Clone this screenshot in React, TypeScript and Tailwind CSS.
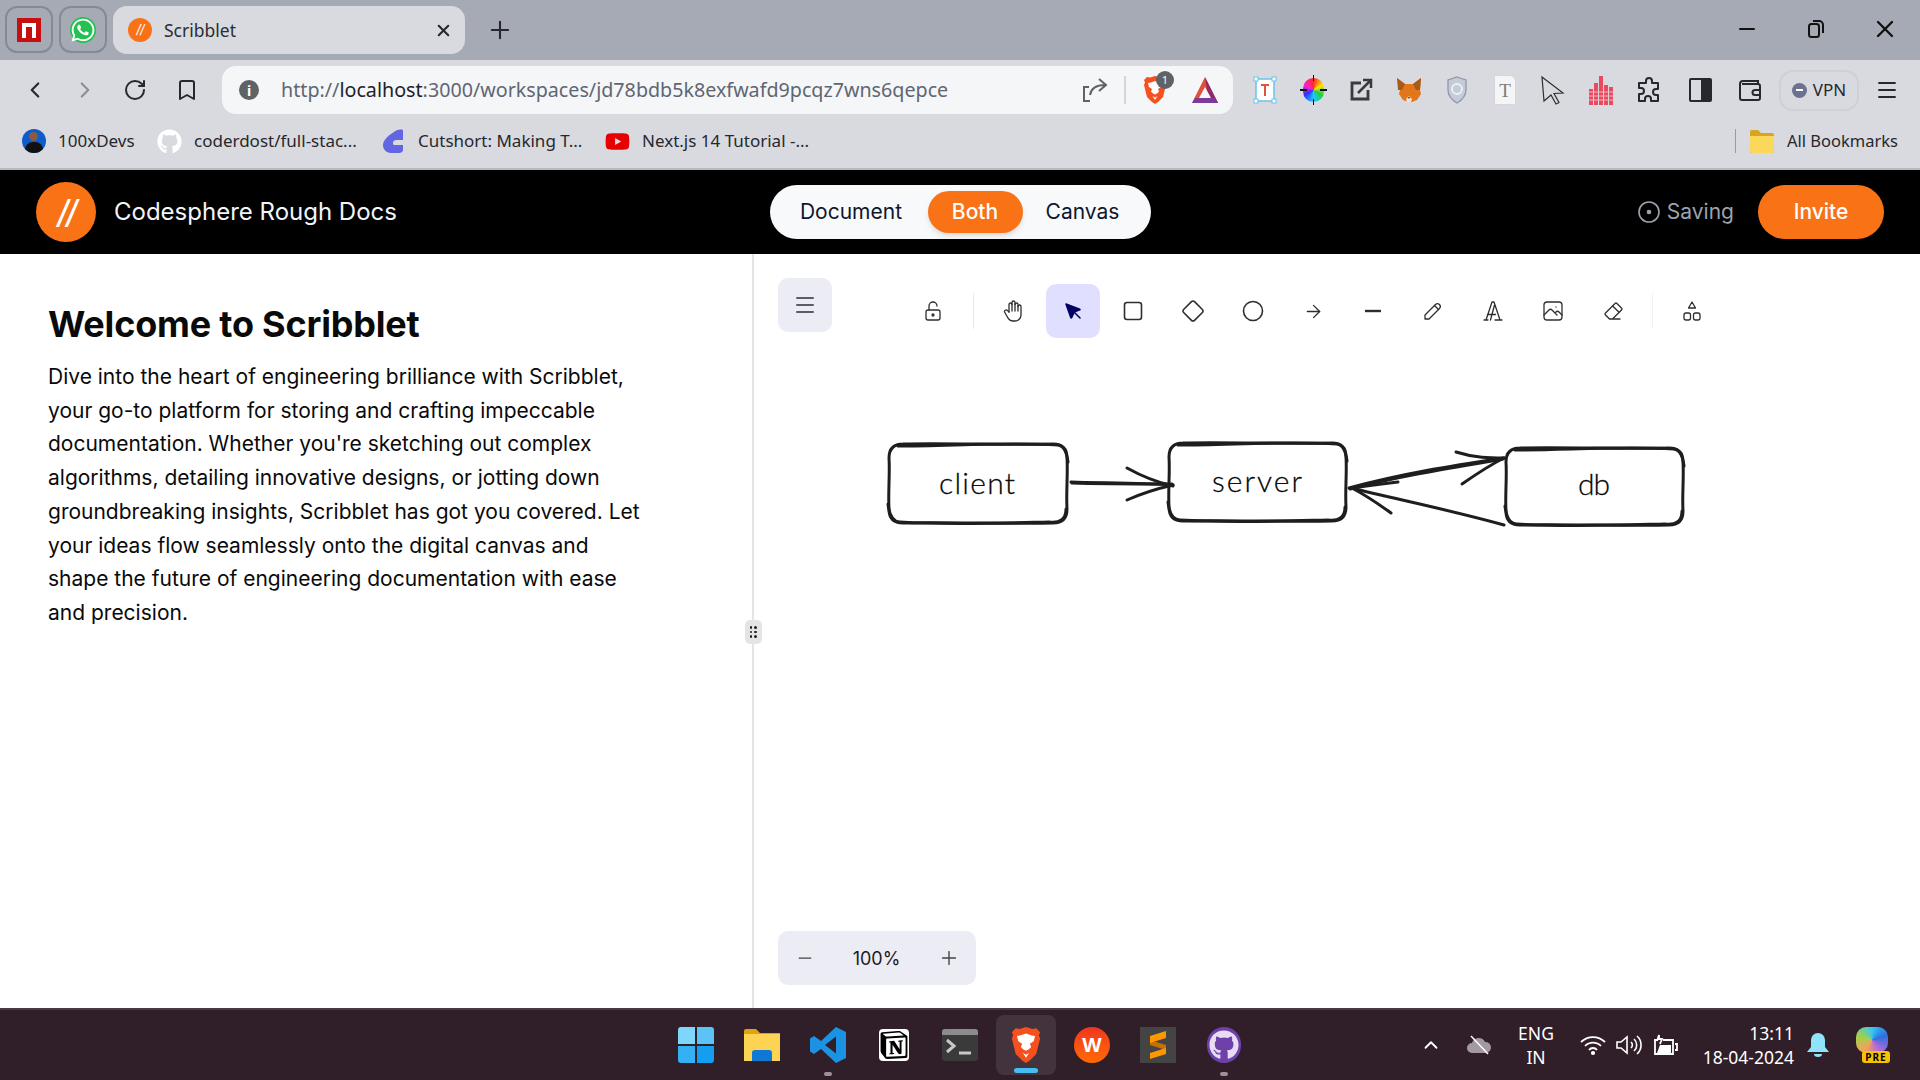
import { useMemo } from 'react';
import { ArrowRight, Bookmark, ChevronLeft, ChevronRight, ChevronUp, Menu, Minus, Plus, RotateCw, X } from 'lucide-react';
import { FaGithub, FaWhatsapp, FaYoutube } from 'react-icons/fa';
import { SiNotion } from 'react-icons/si';

const chromeFont = "font-['Noto_Sans',sans-serif]";

function ScribbletLogo({ className }: { className: string }) {
  return (
    <div className={`flex items-center justify-center rounded-full bg-[#f97316] font-['Inter',sans-serif] italic text-white ${className}`}>
      //
    </div>
  );
}

function BraveIcon({ size = 28 }: { size?: number }) {
  return (
    <svg width={size} height={size} viewBox="0 0 24 28">
      <path d="M12 0l5 1.500 3-.5 3 3-1 2.500 1 2.500-3 12-5 5-3 2-3-2-5-5L1 9l1-2.500L1 4l3-3 3 .5z" fill="#f4511e" />
      <path d="M12 5l4 1.500 3 .5-1 4-3 2 1 2.500-2 2-2 1-2-1-2-2 1-2.500-3-2-1-4 3-.5z" fill="#fff" />
      <path d="M9.500 20l2.500 1.500L14.500 20 12 24z" fill="#fff" />
    </svg>
  );
}

function BookmarkItem({ icon, label, width }: { icon: React.ReactNode; label: string; width: string }) {
  return (
    <div className={`flex items-center gap-[12px] ${width}`}>
      <div className="flex w-[25px] justify-center">{icon}</div>
      <span className="whitespace-nowrap">{label}</span>
    </div>
  );
}

function TabStrip() {
  return (
    <div className="flex h-[60px] shrink-0 items-start bg-[#a6aab5] pt-[6px] pl-[5px]">
      <div className="flex h-[47px] w-[48px] items-center justify-center rounded-[12px] border-2 border-[#858993]">
        <div className="flex h-[24px] w-[24px] items-start justify-center bg-[#c80f0f] pt-[5px]">
          <div className="h-[15px] w-[14px] border-x-[4px] border-t-[4px] border-white" />
        </div>
      </div>
      <div className="ml-[6px] flex h-[47px] w-[48px] items-center justify-center rounded-[12px] border-2 border-[#858993]">
        <div className="flex h-[26px] w-[26px] items-center justify-center rounded-full bg-[#25c052]">
          <FaWhatsapp className="text-[26px] text-white" />
        </div>
      </div>
      <div className={`ml-[6px] flex h-[48px] w-[352px] items-center rounded-[14px] bg-[#d9dadf] pl-[15px] pr-[12px] ${chromeFont}`}>
        <ScribbletLogo className="h-[24px] w-[24px] text-[13px] tracking-[-1px]" />
        <span className="ml-[12px] flex-1 text-[17.500px] text-[#2b2d33]">Scribblet</span>
        <X className="h-[19px] w-[19px] text-[#26282d]" strokeWidth={2.600} />
      </div>
      <Plus className="mt-[10px] ml-[21px] h-[28px] w-[28px] text-[#26282d]" strokeWidth={1.800} />
      <div className="flex-1" />
      <div className="flex h-[46px] items-center pr-[21px] text-[#111]">
        <Minus className="h-[24px] w-[24px]" strokeWidth={2} />
        <svg className="ml-[47px]" width="20" height="20" viewBox="0 0 20 20" fill="none" stroke="currentColor" strokeWidth="2">
          <rect x="3" y="5" width="10" height="13" rx="2.500" />
          <path d="M7 2h6a4 4 0 0 1 4 4v8" />
        </svg>
        <X className="ml-[45px] h-[28px] w-[28px]" strokeWidth={2} />
      </div>
    </div>
  );
}

function ExtensionIcons() {
  return (
    <div className="ml-[8px] flex items-center">
      <div className="flex w-[48px] justify-center">
        <svg width="24" height="28" viewBox="0 0 24 28" fill="none">
          <rect x="3" y="3" width="18" height="22" fill="#fff" stroke="#69c3ec" strokeWidth="1.500" />
          <rect x="1" y="1" width="4" height="4" fill="#fff" stroke="#69c3ec" />
          <rect x="19" y="1" width="4" height="4" fill="#fff" stroke="#69c3ec" />
          <rect x="1" y="23" width="4" height="4" fill="#fff" stroke="#69c3ec" />
          <rect x="19" y="23" width="4" height="4" fill="#fff" stroke="#69c3ec" />
          <path d="M8 9h8M12 9v11" stroke="#e2503f" strokeWidth="2" />
        </svg>
      </div>
      <div className="flex w-[48px] justify-center">
        <div className="relative h-[24px] w-[21px] rounded-full bg-[conic-gradient(#ff2a2a,#ffe600,#20d040,#20c8ff,#3030ff,#ff20c8,#ff2a2a)]">
          <div className="absolute top-[-3px] left-[10px] h-[6px] w-[1.500px] bg-[#111]" />
          <div className="absolute bottom-[-3px] left-[10px] h-[6px] w-[1.500px] bg-[#111]" />
          <div className="absolute top-[11px] left-[-3px] h-[1.500px] w-[7px] bg-[#111]" />
          <div className="absolute top-[11px] right-[-3px] h-[1.500px] w-[7px] bg-[#111]" />
        </div>
      </div>
      <div className="flex w-[48px] justify-center">
        <svg width="24" height="24" viewBox="0 0 24 24" fill="none" stroke="#3a3a3a" strokeWidth="2.800">
          <path d="M12 5H3v16h16v-9" />
          <path d="M9 15L21 3M14 2h8v8" strokeWidth="2.500" />
        </svg>
      </div>
      <div className="flex w-[48px] justify-center">
        <svg width="26" height="26" viewBox="0 0 26 26">
          <path d="M1 1l8 6h8l8-6-1 12 1 4-4 6-5 2h-4l-5-2-4-6 1-4z" fill="#e2761b" />
          <path d="M1 1l8 6-3 6H2zM25 1l-8 6 3 6h4z" fill="#a65a1c" />
          <path d="M10 22l3-3 3 3-1 3h-4z" fill="#f6e2c8" />
          <path d="M12 20h2l-1 2z" fill="#222" />
        </svg>
      </div>
      <div className="flex w-[48px] justify-center">
        <svg width="22" height="28" viewBox="0 0 22 28" fill="#c6cbd8" stroke="#8f97ad" strokeWidth="1.300">
          <path d="M11 1l9 3v10c0 6-4 10-9 13-5-3-9-7-9-13V4z" />
          <circle cx="11" cy="13" r="5" fill="none" stroke="#eef0f5" strokeWidth="1.800" />
        </svg>
      </div>
      <div className="flex w-[48px] justify-center">
        <div className="flex h-[28px] w-[20px] items-center justify-center rounded-tr-[5px] bg-[#f5f5f5] font-['Liberation_Serif',serif] text-[19px] leading-none text-[#7a7a7a] shadow-[0_0_1px_#bbb]">
          T
        </div>
      </div>
      <div className="flex w-[48px] justify-center">
        <svg width="26" height="30" viewBox="0 0 26 30" fill="none" stroke="#2f2f2f" strokeWidth="1.200">
          <path d="M2 2l21 16-9 .5 5 9-3 1.500-5-9-7 6z" />
        </svg>
      </div>
      <div className="flex w-[48px] justify-center">
        <svg width="24" height="30" viewBox="0 0 24 30" fill="#e84a5f">
          <rect x="0" y="14" width="4" height="16" />
          <rect x="5" y="8" width="4" height="22" />
          <rect x="10" y="1" width="4" height="29" />
          <rect x="15" y="10" width="4" height="20" />
          <rect x="20" y="12" width="4" height="18" />
          <path d="M0 17h24M0 21h24M0 25h24" stroke="#f5b5bd" strokeWidth="1" />
        </svg>
      </div>
      <div className="flex w-[48px] justify-center">
        <svg width="24" height="26" viewBox="0 0 24 26" fill="none" stroke="#26282d" strokeWidth="2">
          <path d="M9 4a3 3 0 0 1 6 0v2h6v6h-2a3 3 0 0 0 0 6h2v6h-7v-2a3 3 0 0 0-6 0v2H2v-7h2a3 3 0 0 0 0-6H2V6h7z" strokeLinejoin="round" />
        </svg>
      </div>
      <div className="ml-[3px] flex w-[48px] justify-center">
        <div className="flex h-[24px] w-[23px] justify-end rounded-[2px] border-[2.500px] border-[#26282d]">
          <div className="h-full w-[9px] bg-[#26282d]" />
        </div>
      </div>
      <div className="ml-[2px] flex w-[48px] justify-center">
        <svg width="24" height="24" viewBox="0 0 24 24" fill="none" stroke="#26282d" strokeWidth="2">
          <path d="M20 6V3H5a3 3 0 0 0-3 3v14a2 2 0 0 0 2 2h16a2 2 0 0 0 2-2V8a2 2 0 0 0-2-2H4" />
          <path d="M23 12h-6a2.500 2.500 0 0 0 0 5h6" />
        </svg>
      </div>
    </div>
  );
}

function AddressBar() {
  return (
    <div className="flex h-[56px] shrink-0 items-center bg-[#d9dadf] pt-[6px] pb-[2px] text-[#26282d]">
      <div className="flex w-[222px] items-center pl-[22px]">
        <ChevronLeft className="h-[26px] w-[26px]" strokeWidth={2} />
        <ChevronRight className="ml-[24px] h-[26px] w-[26px] text-[#8d8f96]" strokeWidth={2} />
        <RotateCw className="ml-[25px] h-[24px] w-[24px]" strokeWidth={2} />
        <Bookmark className="ml-[28px] h-[24px] w-[24px]" strokeWidth={2} />
      </div>
      <div className={`flex h-[48px] w-[1011px] items-center rounded-[14px] bg-[#f5f6f8] pl-[17px] ${chromeFont}`}>
        <div className="flex h-[20px] w-[20px] items-center justify-center rounded-full bg-[#5f6267] text-[14px] font-bold text-white">i</div>
        <div className="ml-[22px] whitespace-nowrap text-[19.700px] text-[#5f6672]">
          http://<span className="text-[#1f2228]">localhost</span>:3000/workspaces/jd78bdb5k8exfwafd9pcqz7wns6qepce
        </div>
        <div className="flex-1" />
        <svg width="26" height="26" viewBox="0 0 26 26" fill="none" stroke="#5f6267" strokeWidth="2">
          <path d="M8 24H2V10h5M8 18c1-6 5-10 15-10M17 2l7 6-7 6" />
        </svg>
        <div className="ml-[16px] mr-[15px] h-[28px] w-[2px] bg-[#d3d5da]" />
        <div className="relative">
          <BraveIcon />
          <div className="absolute top-[-5px] left-[15px] flex h-[18px] w-[18px] items-center justify-center rounded-full bg-[#5f6267] text-[11px] text-white">1</div>
        </div>
        <svg className="ml-[22px] mr-[14px]" width="28" height="28" viewBox="0 0 28 28">
          <path d="M14 1L1 27h26z" fill="#e04f39" />
          <path d="M14 1l13 26H18z" fill="#8e2a6b" />
          <path d="M1 27h26l-3-5H4z" fill="#7d3a9a" />
          <path d="M14 11l-6 11h12z" fill="#f5f6f8" />
        </svg>
      </div>
      <ExtensionIcons />
      <div className={`ml-[5px] flex h-[41px] w-[80px] items-center justify-center gap-[6px] rounded-[14px] border-2 border-[#cfd0d6] text-[17px] ${chromeFont}`}>
        <div className="flex h-[15px] w-[15px] items-center justify-center rounded-full bg-[#6d7191]">
          <div className="h-[2px] w-[7px] bg-white" />
        </div>
        VPN
      </div>
      <Menu className="ml-[16px] h-[24px] w-[24px]" strokeWidth={1.800} />
    </div>
  );
}

function BookmarksBar() {
  return (
    <div className={`flex h-[54px] shrink-0 items-center border-b-2 border-[#b7b8bd] bg-[#d9dadf] pb-[2px] pl-[21px] pr-[22px] text-[17px] text-[#26282d] ${chromeFont}`}>
      <BookmarkItem
        width="w-[136px]"
        label="100xDevs"
        icon={
          <div className="flex h-[24px] w-[24px] flex-col items-center overflow-hidden rounded-full bg-[#0d5cc7] pt-[3px]">
            <div className="h-[9px] w-[9px] rounded-full bg-[#8a5a44]" />
            <div className="mt-[1px] h-[12px] w-[18px] rounded-t-[8px] bg-[#111]" />
          </div>
        }
      />
      <BookmarkItem width="w-[224px]" label="coderdost/full-stac..." icon={<FaGithub className="text-[25px] text-white" />} />
      <BookmarkItem
        width="w-[224px]"
        label="Cutshort: Making T..."
        icon={
          <svg width="24" height="24" viewBox="0 0 24 24" fill="#6366e1">
            <path d="M12 3c2-2 6-3 9-2v10h-7c-3 0-4 4-2 5h9v5c0 2-2 3-4 3H9c-5 0-8-4-8-8 0-5 6-10 11-13z" />
          </svg>
        }
      />
      <BookmarkItem width="w-[200px]" label="Next.js 14 Tutorial -..." icon={<FaYoutube className="text-[27px] text-[#e60000]" />} />
      <div className="flex-1" />
      <div className="h-[24px] w-px bg-[#9a9ba1]" />
      <svg className="ml-[14px]" width="24" height="24" viewBox="0 0 24 24">
        <path d="M0 3a2 2 0 0 1 2-2h6l3 3h11a2 2 0 0 1 2 2v16a2 2 0 0 1-2 2H2a2 2 0 0 1-2-2z" fill="#d9a520" />
        <path d="M0 7h24v15a2 2 0 0 1-2 2H2a2 2 0 0 1-2-2z" fill="#fbd75b" />
      </svg>
      <span className="ml-[13px] whitespace-nowrap text-[16.500px]">All Bookmarks</span>
    </div>
  );
}

function AppHeader() {
  return (
    <header className="flex h-[84px] shrink-0 items-center bg-black px-[36px] font-['Inter',sans-serif] text-[21px]">
      <div className="flex flex-1 items-center">
        <ScribbletLogo className="h-[60px] w-[60px] text-[32px] font-medium tracking-[-3px]" />
        <span className="ml-[18px] text-[24px] text-slate-100">Codesphere Rough Docs</span>
      </div>
      <div className="flex h-[54px] w-[381px] items-center rounded-full bg-[#f8f9fb] px-[8px] text-slate-900">
        <span className="mr-[3px] w-[147px] text-center">Document</span>
        <span className="flex h-[42px] w-[95px] items-center justify-center rounded-full bg-[#f97316] font-medium text-white shadow-md">Both</span>
        <span className="w-[120px] text-center">Canvas</span>
      </div>
      <div className="flex flex-1 items-center justify-end">
        <svg width="22" height="22" viewBox="0 0 22 22" fill="none" stroke="#9ca3af" strokeWidth="1.600">
          <circle cx="11" cy="11" r="10" />
          <circle cx="11" cy="11" r="1.500" fill="#9ca3af" />
        </svg>
        <span className="ml-[7px] text-[#9ca3af]">Saving</span>
        <div className="ml-[24px] flex h-[54px] w-[126px] items-center justify-center rounded-full bg-[#f97316] font-medium text-white">Invite</div>
      </div>
    </header>
  );
}

function DocumentPane() {
  return (
    <div className="w-[752px] shrink-0 bg-white pt-[50px] pl-[48px] font-['Inter',sans-serif] text-[#0a0a0a]">
      <h1 className="text-[36px] leading-[40px] font-bold tracking-[-0.2px]">Welcome to Scribblet</h1>
      <p className="mt-[16px] w-[600px] text-[21px] leading-[33.700px]">
        Dive into the heart of engineering brilliance with Scribblet, your go-to platform for storing and crafting impeccable documentation. Whether you're sketching out complex algorithms, detailing innovative designs, or jotting down groundbreaking insights, Scribblet has got you covered. Let your ideas flow seamlessly onto the digital canvas and shape the future of engineering documentation with ease and precision.
      </p>
    </div>
  );
}

function ResizeHandle() {
  return (
    <div className="relative w-[2px] shrink-0 bg-[#e4e4e7]">
      <div className="absolute top-[366px] left-[-7.500px] grid h-[24px] w-[17px] grid-cols-2 content-center justify-center gap-x-[2px] gap-y-[2px] rounded-[5px] bg-[#e4e4e7] px-[5px]">
        {Array.from({ length: 6 }).map((_, i) => (
          <div key={i} className="h-[2.500px] w-[2.500px] rounded-full bg-[#222]" />
        ))}
      </div>
    </div>
  );
}

const toolStroke = { fill: 'none', stroke: 'currentColor', strokeWidth: 1.300, strokeLinecap: 'round', strokeLinejoin: 'round' } as const;

const tools: { id: string; selected?: boolean; icon: React.ReactNode }[] = [
  {
    id: 'hand',
    icon: (
      <svg width="24" height="24" viewBox="0 0 24 24" {...toolStroke}>
        <path d="M8 13v-7.500a1.500 1.500 0 0 1 3 0v6.500" />
        <path d="M11 5.500v-2a1.500 1.500 0 1 1 3 0v8.500" />
        <path d="M14 5.500a1.500 1.500 0 0 1 3 0v6.500" />
        <path d="M17 7.500a1.500 1.500 0 0 1 3 0v8.500a6 6 0 0 1-6 6h-2h.208a6 6 0 0 1-5.012-2.700l-.196-.3c-.312-.479-1.407-2.388-3.286-5.728a1.500 1.500 0 0 1 .536-2.022 1.867 1.867 0 0 1 2.280.280l1.470 1.470" />
      </svg>
    ),
  },
  {
    id: 'select',
    selected: true,
    icon: (
      <svg width="28" height="28" viewBox="0 0 24 24" fill="#030064" stroke="#030064" strokeWidth="1.300" strokeLinecap="round" strokeLinejoin="round">
        <path d="M6 6l4.153 11.793a.365.365 0 0 0 .331.207.366.366 0 0 0 .332-.207l2.184-4.793 4.787-1.994a.355.355 0 0 0 .213-.323.355.355 0 0 0-.213-.323L6 6z" />
        <path d="M13.500 13.500L18 18" />
      </svg>
    ),
  },
  {
    id: 'rect',
    icon: (
      <svg width="24" height="24" viewBox="0 0 24 24" {...toolStroke} strokeWidth={1.600}>
        <rect x="3.500" y="3.500" width="17" height="17" rx="2.500" />
      </svg>
    ),
  },
  {
    id: 'diamond',
    icon: (
      <svg width="24" height="24" viewBox="0 0 24 24" {...toolStroke} strokeWidth={1.600}>
        <path d="M10.500 2.600a2.100 2.100 0 0 1 3 0l7.900 7.900a2.100 2.100 0 0 1 0 3l-7.900 7.900a2.100 2.100 0 0 1-3 0l-7.900-7.900a2.100 2.100 0 0 1 0-3z" />
      </svg>
    ),
  },
  {
    id: 'ellipse',
    icon: (
      <svg width="24" height="24" viewBox="0 0 24 24" {...toolStroke} strokeWidth={1.600}>
        <circle cx="12" cy="12" r="9.500" />
      </svg>
    ),
  },
  { id: 'arrow', icon: <ArrowRight className="h-[21px] w-[21px]" strokeWidth={1.500} /> },
  {
    id: 'line',
    icon: (
      <svg width="24" height="24" viewBox="0 0 24 24" stroke="currentColor" strokeWidth="2.400">
        <path d="M4 12h16" />
      </svg>
    ),
  },
  {
    id: 'draw',
    icon: (
      <svg width="24" height="24" viewBox="0 0 24 24" {...toolStroke}>
        <path d="M4 20h4L18.500 9.500a2.830 2.830 0 0 0-4-4L4 16v4" />
        <path d="M13.500 6.500l4 4" />
      </svg>
    ),
  },
  {
    id: 'text',
    icon: (
      <svg width="24" height="24" viewBox="0 0 24 24" {...toolStroke}>
        <path d="M3 21h4M14 21h7M6.500 15.500h8M5 21l6-18h2l6 18M9.500 21l4-15" />
      </svg>
    ),
  },
  {
    id: 'image',
    icon: (
      <svg width="24" height="24" viewBox="0 0 24 24" {...toolStroke}>
        <rect x="3" y="3" width="18" height="18" rx="3" />
        <path d="M15 8h.01M3 16l5-5c.928-.893 2.072-.893 3 0l5 5M14 14l1-1c.928-.893 2.072-.893 3 0l3 3" />
      </svg>
    ),
  },
  {
    id: 'eraser',
    icon: (
      <svg width="24" height="24" viewBox="0 0 24 24" {...toolStroke}>
        <path d="M19 20H8.500l-4.210-4.300a1 1 0 0 1 0-1.410l10-10a1 1 0 0 1 1.410 0l5 5a1 1 0 0 1 0 1.410l-9.200 9.300" />
        <path d="M18 13.300L11.700 7" />
      </svg>
    ),
  },
];

function CanvasToolbar() {
  return (
    <div className="ml-[74px] mt-[6px] flex items-center text-[#2e2e32]">
      <div className="flex h-[54px] w-[54px] items-center justify-center">
        <svg width="24" height="24" viewBox="0 0 24 24" {...toolStroke}>
          <rect x="5" y="11" width="14" height="10" rx="2" />
          <circle cx="12" cy="16" r="1" />
          <path d="M8 11V7a4 4 0 0 1 8 0" />
        </svg>
      </div>
      <div className="mx-[12.500px] h-[36px] w-px bg-[#e9e9f5]" />
      <div className="flex gap-[6px]">
        {tools.map((tool) => (
          <div key={tool.id} className={`flex h-[54px] w-[54px] items-center justify-center rounded-[10px] ${tool.selected ? 'bg-[#e0dfff]' : ''}`}>
            {tool.icon}
          </div>
        ))}
      </div>
      <div className="mx-[12px] h-[36px] w-px bg-[#f1f1f5]" />
      <div className="flex h-[54px] w-[54px] items-center justify-center">
        <svg width="24" height="24" viewBox="0 0 24 24" {...toolStroke}>
          <path d="M12 3l3.500 6h-7z" />
          <rect x="4" y="14" width="6.500" height="7" rx="2" />
          <rect x="13.500" y="14" width="6.500" height="7" rx="2" />
        </svg>
      </div>
    </div>
  );
}

// two loose passes per box, the way the canvas draws them
function roughBox(x0: number, y0: number, x1: number, y1: number, r = 14) {
  const a = `M${x0 + r} ${y0}C${x0 + 50} ${y0 - 1} ${x1 - 50} ${y0 + 1} ${x1 - r} ${y0}Q${x1} ${y0} ${x1} ${y0 + r}C${x1 + 1} ${y0 + 30} ${x1 - 1} ${y1 - 30} ${x1} ${y1 - r}Q${x1} ${y1} ${x1 - r} ${y1}C${x1 - 50} ${y1 + 1} ${x0 + 50} ${y1 - 1} ${x0 + r} ${y1}Q${x0} ${y1} ${x0} ${y1 - r}C${x0 - 1} ${y1 - 30} ${x0 + 1} ${y0 + 30} ${x0} ${y0 + r}Q${x0} ${y0} ${x0 + r} ${y0}`;
  const b = `M${x0 + r - 5} ${y0 + 2}C${x0 + 60} ${y0 + 2} ${x1 - 60} ${y0 - 2} ${x1 - r + 5} ${y0 + 1}Q${x1 - 1} ${y0 + 2} ${x1 + 1} ${y0 + r + 4}M${x1 - 1} ${y1 - r}Q${x1 - 1} ${y1 + 1} ${x1 - r - 4} ${y1 - 1}C${x1 - 60} ${y1} ${x0 + 60} ${y1 + 2} ${x0 + r - 3} ${y1 - 1}Q${x0 + 1} ${y1 - 1} ${x0 - 1} ${y1 - r - 5}`;
  return [a, b];
}

function Diagram() {
  const boxes = useMemo(() => [roughBox(889, 444, 1067, 523), roughBox(1169, 443, 1346, 521), roughBox(1506, 448, 1683, 525)], []);
  const lines = [
    'M1071 482C1100 483 1140 483 1173 485',
    'M1072 483C1100 484 1140 484 1172 484',
    'M1127 468C1145 478 1160 483 1173 486',
    'M1127 500C1145 492 1160 488 1173 485',
    'M1349 488C1400 474 1450 466 1504 458',
    'M1350 489C1400 476 1450 468 1503 459',
    'M1456 452C1475 458 1490 458 1504 458',
    'M1462 484C1475 475 1490 465 1504 458',
    'M1504 525C1450 510 1400 500 1351 488',
    'M1398 482C1380 484 1365 486 1352 488',
    'M1391 513C1380 505 1365 495 1352 488',
  ];
  return (
    <svg className="pointer-events-none absolute inset-0 h-full w-full" fill="none">
      <g transform="translate(-754 -254)" stroke="#1e1e1e" strokeWidth="3" strokeLinecap="round" strokeLinejoin="round">
        {boxes.map((paths, i) => paths.map((d, j) => <path key={`${i}-${j}`} d={d} />))}
        {lines.map((d) => (
          <path key={d} d={d} />
        ))}
        <g className="font-['Lato',sans-serif]" fill="#000" stroke="#1e1e1e" strokeWidth="0.300" fontSize="30" fontWeight="300" textAnchor="middle">
          <text x="977" y="494" textLength="76">client</text>
          <text x="1257" y="492" textLength="90">server</text>
          <text x="1594" y="495" textLength="32">db</text>
        </g>
      </g>
    </svg>
  );
}

function CanvasPane() {
  return (
    <div className="relative flex flex-1 flex-col justify-between pt-[24px] pr-[24px] pb-[23px] pl-[24px] font-['Inter',sans-serif]">
      <Diagram />
      <div className="relative flex items-start">
        <div className="flex h-[54px] w-[54px] items-center justify-center rounded-[10px] bg-[#ececf4]">
          <Menu className="h-[24px] w-[24px] text-[#5c5c66]" strokeWidth={2} />
        </div>
        <CanvasToolbar />
      </div>
      <div className="relative flex h-[54px] w-[198px] items-center justify-between rounded-[10px] bg-[#ececf4] pl-[17px] pr-[16px] text-[18px] text-[#1b1b1f]">
        <Minus className="h-[20px] w-[20px] text-[#444]" strokeWidth={1.500} />
        <span>100%</span>
        <Plus className="h-[22px] w-[22px] text-[#444]" strokeWidth={1.500} />
      </div>
    </div>
  );
}

function Taskbar() {
  return (
    <div className={`flex h-[72px] shrink-0 items-center border-t-2 border-[#48393f] bg-[#301e29] text-[18px] text-white ${chromeFont}`}>
      <div className="flex-1" />
      <div className="flex items-center">
        <div className="flex w-[66px] justify-center">
          <div className="grid h-[36px] w-[36px] grid-cols-2 gap-[2px]">
            <div className="rounded-tl-[3px] bg-[#7fd6fb]" />
            <div className="rounded-tr-[3px] bg-[#5cc3f7]" />
            <div className="rounded-bl-[3px] bg-[#35b0f4]" />
            <div className="rounded-br-[3px] bg-[#139ef0]" />
          </div>
        </div>
        <div className="flex w-[66px] justify-center">
          <svg width="36" height="32" viewBox="0 0 36 32">
            <path d="M0 2a2 2 0 0 1 2-2h10l4 4h20v4H0z" fill="#e0a30f" />
            <path d="M0 5h36v27H0z" fill="#fcd353" />
            <path d="M8 24a3 3 0 0 1 3-3h14a3 3 0 0 1 3 3v8H8z" fill="#0f78d4" />
          </svg>
        </div>
        <div className="relative flex w-[66px] justify-center">
          <svg width="36" height="36" viewBox="0 0 36 36">
            <path d="M26 0l10 5v26l-10 5L11 22l-7 5-4-2.500v-13L4 9l7 5z" fill="#1b93e2" />
            <path d="M26 9.500L15 18l11 8.500z" fill="#301e29" />
          </svg>
          <div className="absolute top-[45px] h-[4px] w-[8px] rounded-full bg-[#9a9297]" />
        </div>
        <div className="flex w-[66px] justify-center">
          <div className="flex h-[32px] w-[30px] items-center justify-center rounded-[4px] bg-white">
            <SiNotion className="text-[28px] text-black" />
          </div>
        </div>
        <div className="flex w-[66px] justify-center">
          <div className="h-[32px] w-[36px] overflow-hidden rounded-[3px] bg-[#3a3a3a]">
            <div className="h-[6px] bg-[#8c8c8c]" />
            <svg width="36" height="26" viewBox="0 0 36 26" fill="none" stroke="#c8c8c8" strokeWidth="3">
              <path d="M5 5l7 6-7 6M17 18h12" />
            </svg>
          </div>
        </div>
        <div className="relative mx-[3px] flex h-[60px] w-[60px] items-center justify-center rounded-[8px] bg-[#43333c]">
          <BraveIcon size={36} />
          <div className="absolute top-[53px] h-[5px] w-[24px] rounded-full bg-[#47bdf5]" />
        </div>
        <div className="flex w-[66px] justify-center">
          <div className="flex h-[36px] w-[36px] items-center justify-center rounded-full bg-gradient-to-b from-[#f0341d] to-[#ff6a00] text-[20px] font-bold text-white">W</div>
        </div>
        <div className="flex w-[66px] justify-center">
          <div className="flex h-[36px] w-[36px] items-center justify-center bg-[#444]">
            <svg width="20" height="28" viewBox="0 0 20 28">
              <path d="M2 9l16 5v5L2 14z" fill="#c96f00" />
              <path d="M18 0v7L2 12V5zM18 17v6L2 28v-6z" fill="#ff9800" />
            </svg>
          </div>
        </div>
        <div className="relative flex w-[66px] justify-center">
          <div className="flex h-[36px] w-[34px] items-center justify-center rounded-full bg-[#6e40aa]">
            <FaGithub className="text-[30px] text-[#e8dcf5]" />
          </div>
          <div className="absolute top-[45px] h-[4px] w-[8px] rounded-full bg-[#9a9297]" />
        </div>
      </div>
      <div className="flex flex-1 items-center justify-end">
        <ChevronUp className="h-[22px] w-[22px]" strokeWidth={2} />
        <svg className="ml-[24px]" width="26" height="22" viewBox="0 0 26 22">
          <path d="M6 19a5 5 0 0 1 0-10 7 7 0 0 1 13-1 5.500 5.500 0 0 1 1 11z" fill="#a29aa0" />
          <path d="M5 2l17 18" stroke="#fff" strokeWidth="1.500" />
        </svg>
        <div className="ml-[22px] flex w-[44px] flex-col items-center text-[17.500px] leading-[24px]">
          <span>ENG</span>
          <span>IN</span>
        </div>
        <svg className="ml-[22px]" width="26" height="22" viewBox="0 0 26 22" fill="none" stroke="#fff" strokeWidth="1.800">
          <path d="M1 8a17 17 0 0 1 24 0M5 12a11 11 0 0 1 16 0M9 16a5 5 0 0 1 8 0" />
          <circle cx="13" cy="19" r="1.200" fill="#fff" />
        </svg>
        <svg className="ml-[10px]" width="26" height="24" viewBox="0 0 26 24" fill="none" stroke="#fff" strokeWidth="1.600">
          <path d="M1 9v6h4l6 5V4L5 9zM15 9a4 4 0 0 1 0 6M18 6a8 8 0 0 1 0 12M21 3a12 12 0 0 1 0 18" />
        </svg>
        <svg className="ml-[10px]" width="26" height="22" viewBox="0 0 26 22" fill="none" stroke="#fff" strokeWidth="1.800">
          <path d="M6 6H3v14h18V6H11M23 10h2v6h-2" />
          <path d="M5 19l3-8h11v8z" fill="#fff" stroke="none" />
          <path d="M5 7l2-6v4h3L8 10" />
        </svg>
        <div className="ml-[22px] flex w-[94px] flex-col items-end text-[17.500px] leading-[24px] whitespace-nowrap">
          <span>13:11</span>
          <span>18-04-2024</span>
        </div>
        <svg className="ml-[13px]" width="22" height="26" viewBox="0 0 22 26" fill="#8fe3fb">
          <path d="M11 1a7 7 0 0 1 7 7v7l4 5H0l4-5V8a7 7 0 0 1 7-7z" />
          <path d="M7 22h8a4 3 0 0 1-8 0z" />
        </svg>
        <div className="relative ml-[25px] mr-[30px] h-[36px] w-[36px]">
          <div className="absolute top-0 left-[2px] h-[26px] w-[32px] rounded-[10px] bg-[conic-gradient(#37c6f4,#2f6fe0,#b46ad8,#f5a15a,#9fd24a,#37c6f4)]" />
          <div className="absolute right-0 bottom-0 left-[8px] flex h-[12px] items-center justify-center rounded-[3px] bg-[#f7c300] text-[10px] leading-none font-bold tracking-[1px] text-black">PRE</div>
        </div>
      </div>
    </div>
  );
}

export default function App() {
  return (
    <div className="flex h-[1080px] w-[1920px] flex-col overflow-hidden bg-white">
      <TabStrip />
      <AddressBar />
      <BookmarksBar />
      <AppHeader />
      <div className="flex min-h-0 flex-1">
        <DocumentPane />
        <ResizeHandle />
        <CanvasPane />
      </div>
      <Taskbar />
    </div>
  );
}
